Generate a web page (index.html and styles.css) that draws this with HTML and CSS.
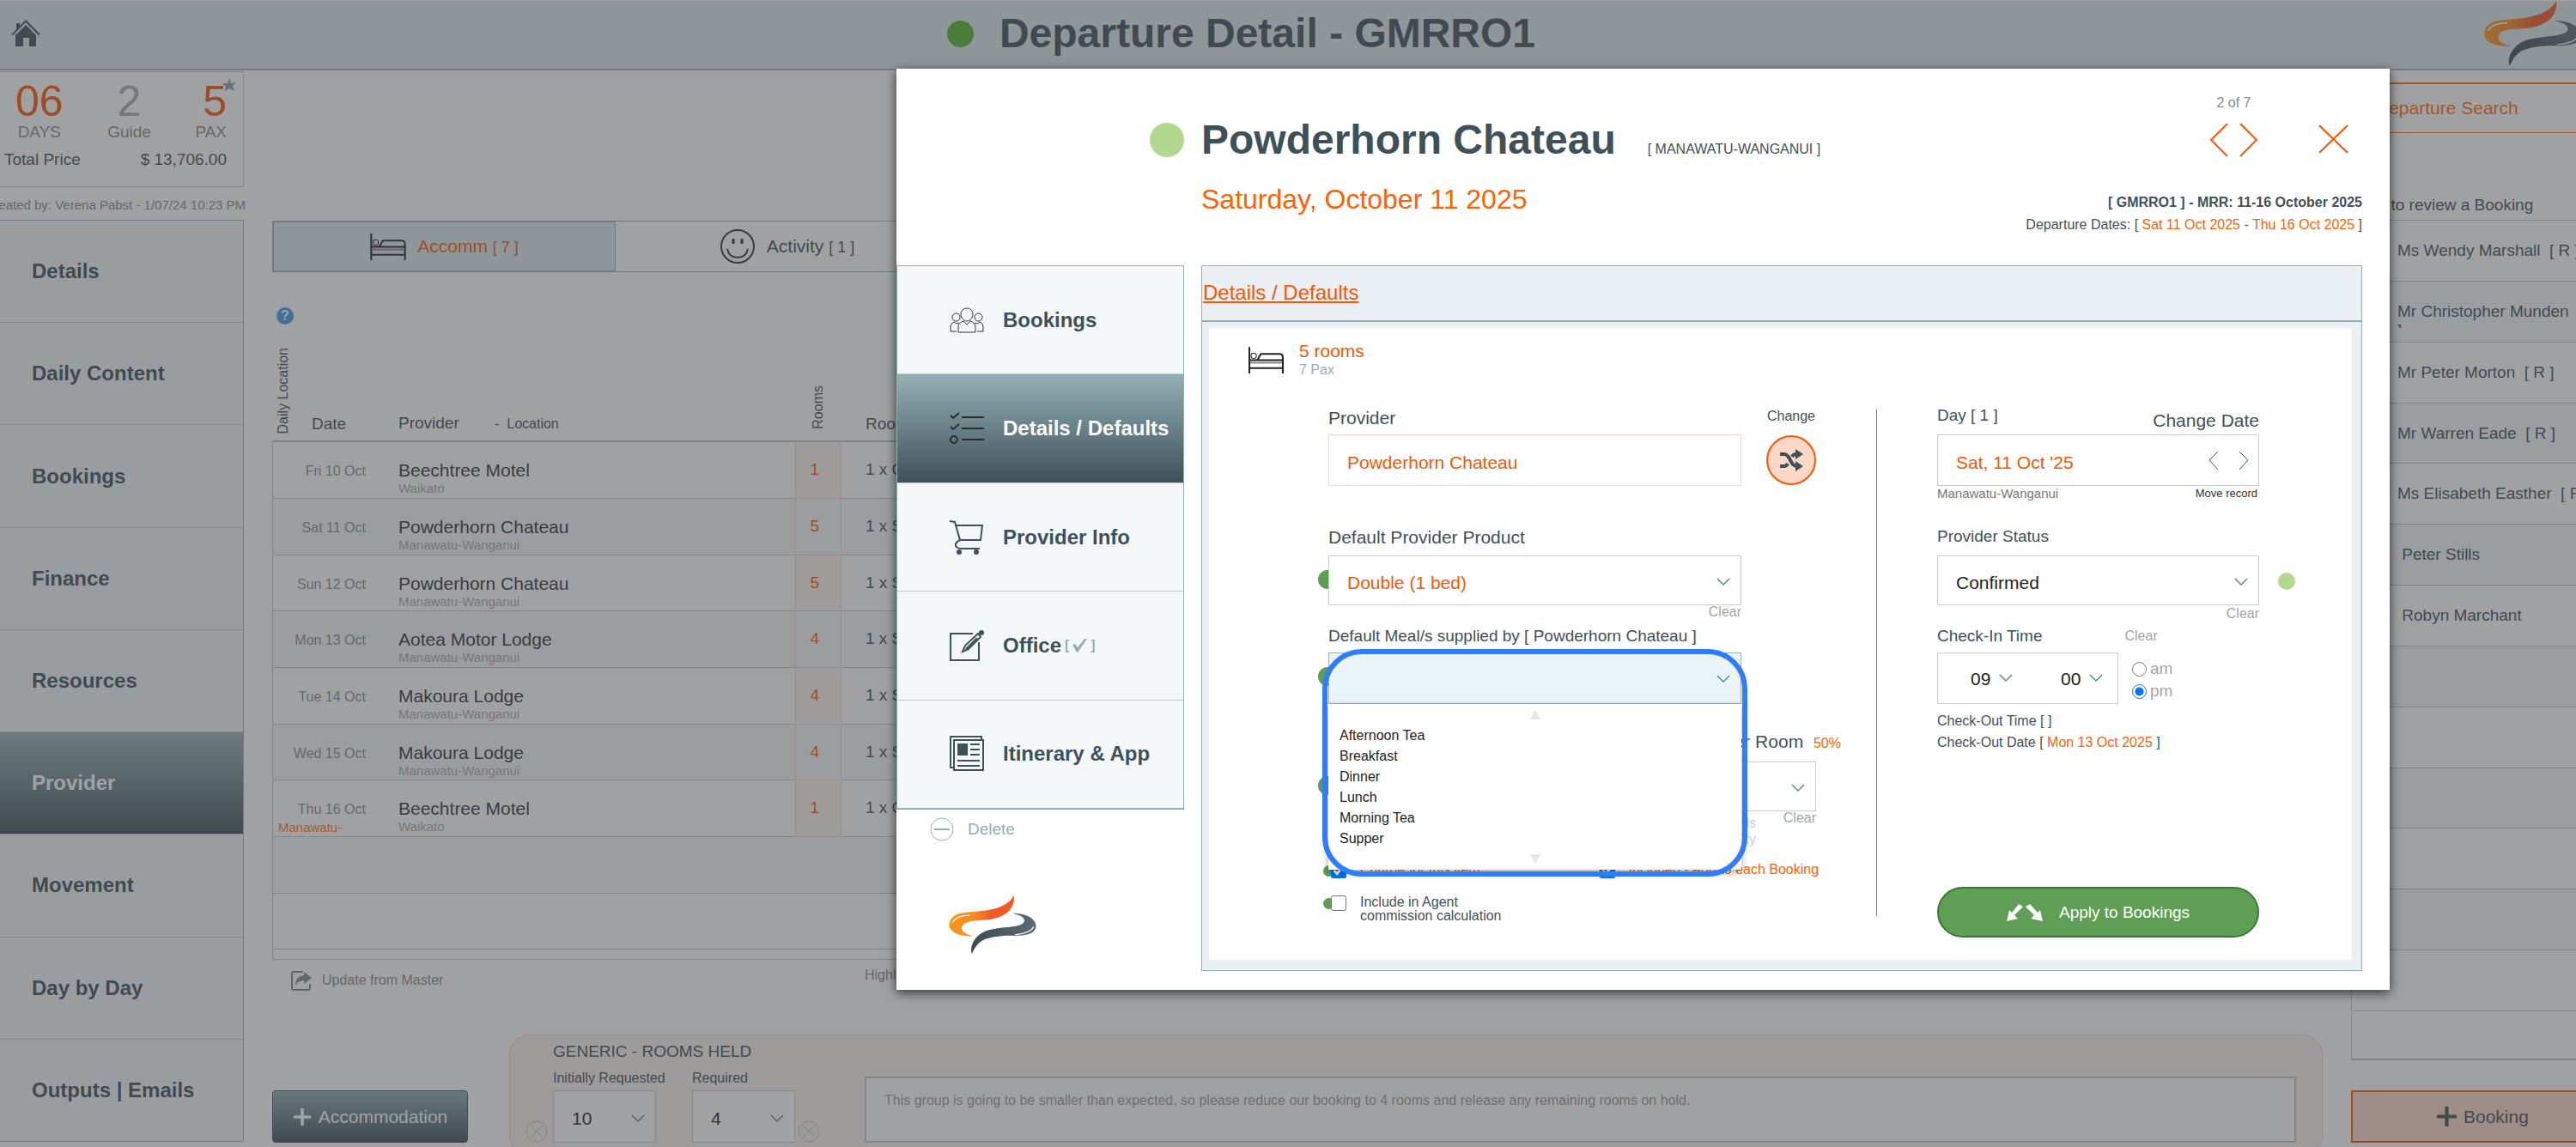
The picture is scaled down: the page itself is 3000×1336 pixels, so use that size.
FILE: index.html
```html
<!DOCTYPE html>
<html lang="en">

<head>
  <meta charset="UTF-8">
  <title>Departure Detail - GMRRO1</title>
  <link rel="stylesheet" href="styles.css">
</head>

<body>

  <!-- shared icons -->
  <svg class="sprite" aria-hidden="true">
    <defs>
      <linearGradient id="flame" x1="0" y1="0" x2="1" y2="0">
        <stop offset="0" stop-color="#f7981d" />
        <stop offset="0.4" stop-color="#f78a1e" />
        <stop offset="0.65" stop-color="#f15a24" />
        <stop offset="1" stop-color="#f1592a" />
      </linearGradient>
      <linearGradient id="slate" x1="0" y1="0" x2="1" y2="0">
        <stop offset="0" stop-color="#3c4c55" />
        <stop offset="1" stop-color="#5b6c75" />
      </linearGradient>
    </defs>
    <symbol id="logo" viewBox="132 68 312 212">
      <path fill="url(#flame)" d="M362 70C367 92 358 118 335 135C300 158 265 158 225 160C190 162 174 178 180 192C186 205 204 210 219 214C185 217 150 207 138 188C128 166 144 138 180 133C220 128 255 128 290 119C330 109 352 92 362 70Z" />
      <path fill="url(#slate)" d="M358 134C392 132 438 146 441 178C440 208 405 213 365 213C320 212 285 217 258 227C238 236 228 250 215 277C208 258 216 232 238 212C262 192 290 189 330 184C370 180 398 176 400 160C400 146 380 139 358 134Z" />
      <path fill="none" stroke="#fff" stroke-width="4" stroke-linecap="round" d="M147 165C156 150 176 141 206 141M368 209C400 206 424 197 432 183" />
    </symbol>
    <symbol id="bed" viewBox="0 0 40 30">
      <path fill="none" stroke="currentColor" stroke-width="2" d="M1 0V30M39 15V30M1 24H39M1 15H39V12Q39 8 35 8H14L10 15" />
      <path fill="none" stroke="#888" stroke-width="2" d="M2 18H38" />
      <circle cx="6" cy="10" r="3" fill="none" stroke="currentColor" stroke-width="1" />
    </symbol>
    <symbol id="down" viewBox="0 0 16 9">
      <path fill="none" stroke="#5c8a91" stroke-width="1.5" d="M1 1L8 8L15 1" />
    </symbol>
    <symbol id="cancel" viewBox="0 0 26 26">
      <path fill="none" stroke="currentColor" stroke-width="1" d="M13 1A12 12 0 1 0 13 25A12 12 0 1 0 13 1M6 6L20 20M20 6L6 20" />
    </symbol>
    <symbol id="plus" viewBox="0 0 24 24">
      <path fill="none" stroke="currentColor" stroke-width="4" d="M12 1V23M1 12H23" />
    </symbol>
  </svg>

  <header class="topbar">
    <a class="home" href="#" aria-label="Home">
      <svg width="34" height="32" viewBox="0 0 34 32">
        <path fill="#3e5159" d="M17 0L34 17L32 18L17 3L2 18L0 17L6 11V4H10V7ZM17 6L29 18V31H21V21H14V31H5V18Z" />
      </svg>
    </a>
    <h1 class="topbar-title"><span class="dot dot-live"></span>Departure Detail - GMRRO1</h1>
    <svg class="topbar-logo" width="115" height="78"><use href="#logo" /></svg>
  </header>

  <div class="layout">
    <aside class="sidebar">
      <section class="summary">
        <div class="stats">
          <div class="stat"><b class="stat-num">06</b>DAYS</div>
          <div class="stat"><b class="stat-num muted">2</b>Guide</div>
          <div class="stat stat-last"><b class="stat-num">5</b>PAX
            <svg class="star" width="16" height="16" viewBox="0 0 16 16">
              <path fill="#7fa6ab" d="M8 0L10 6L16 5L12 9L14 15L8 12L3 15L4 10L0 6L6 6Z" />
            </svg>
          </div>
        </div>
        <div class="total"><span>Total Price</span><span>$ 13,706.00</span></div>
      </section>
      <p class="created"><span>Created by: Verena Pabst - 1/07/24 10:23 PM</span></p>
      <nav class="side-nav">
        <a href="#">Details</a>
        <a href="#">Daily Content</a>
        <a href="#">Bookings</a>
        <a href="#">Finance</a>
        <a href="#">Resources</a>
        <a href="#" class="active">Provider</a>
        <a href="#">Movement</a>
        <a href="#">Day by Day</a>
        <a href="#">Outputs | Emails</a>
      </nav>
    </aside>

    <main class="main">
      <div class="tabs">
        <button class="tab active" type="button">
          <svg class="tab-bed" width="42" height="31"><use href="#bed" /></svg>
          <span>Accomm <small>[ 7 ]</small></span>
        </button>
        <button class="tab" type="button">
          <svg width="42" height="42" viewBox="0 0 42 42" fill="none" stroke="#333" stroke-width="2">
            <circle cx="21" cy="21" r="19" />
            <path d="M9 24Q11 34 21 34T33 24" />
            <path stroke-width="3" d="M16 12V18M26 12V18" />
          </svg>
          <span>Activity <small>[ 1 ]</small></span>
        </button>
      </div>
      <button class="help" type="button">?</button>

      <table class="providers">
        <colgroup>
          <col class="col-date">
          <col class="col-provider">
          <col class="col-rooms">
          <col>
        </colgroup>
        <thead>
          <tr>
            <th>
              <div class="date-head"><span class="vertical">Daily Location</span><span>Date</span></div>
            </th>
            <th>Provider <span class="head-small">-&nbsp; Location</span></th>
            <th class="rooms-head"><span class="vertical">Rooms</span></th>
            <th class="types">Rooms</th>
          </tr>
        </thead>
        <tbody>
          <tr>
            <td class="date">Fri 10 Oct</td>
            <td class="provider">Beechtree Motel<small>Waikato</small></td>
            <td class="rooms">1</td>
            <td class="types">1 x Queen</td>
          </tr>
          <tr>
            <td class="date">Sat 11 Oct</td>
            <td class="provider">Powderhorn Chateau<small>Manawatu-Wanganui</small></td>
            <td class="rooms">5</td>
            <td class="types">1 x Single</td>
          </tr>
          <tr>
            <td class="date">Sun 12 Oct</td>
            <td class="provider">Powderhorn Chateau<small>Manawatu-Wanganui</small></td>
            <td class="rooms">5</td>
            <td class="types">1 x Single</td>
          </tr>
          <tr>
            <td class="date">Mon 13 Oct</td>
            <td class="provider">Aotea Motor Lodge<small>Manawatu-Wanganui</small></td>
            <td class="rooms">4</td>
            <td class="types">1 x Single</td>
          </tr>
          <tr>
            <td class="date">Tue 14 Oct</td>
            <td class="provider">Makoura Lodge<small>Manawatu-Wanganui</small></td>
            <td class="rooms">4</td>
            <td class="types">1 x Single</td>
          </tr>
          <tr>
            <td class="date">Wed 15 Oct</td>
            <td class="provider">Makoura Lodge<small>Manawatu-Wanganui</small></td>
            <td class="rooms">4</td>
            <td class="types">1 x Single</td>
          </tr>
          <tr>
            <td class="date">Thu 16 Oct<small>Manawatu-</small></td>
            <td class="provider">Beechtree Motel<small>Waikato</small></td>
            <td class="rooms">1</td>
            <td class="types">1 x Queen</td>
          </tr>
          <tr>
            <td colspan="4"></td>
          </tr>
          <tr>
            <td colspan="4"></td>
          </tr>
        </tbody>
      </table>
      <div class="table-end"></div>

      <div class="under-table">
        <button class="update" type="button">
          <svg width="24" height="24" viewBox="0 0 24 24">
            <path fill="none" stroke="#888" stroke-width="2" d="M14 2H3Q1 2 1 4V21Q1 23 3 23H20Q22 23 22 21V16" />
            <path fill="#888" d="M15 2L24 9L15 16V12Q8 12 5 18Q5 7 15 6Z" />
          </svg>
          Update from Master
        </button>
        <span class="highlight">Highlight</span>
      </div>

      <div class="bottom">
        <button class="add-accomm" type="button"><svg width="22" height="22"><use href="#plus" /></svg>Accommodation</button>
        <section class="held">
          <div class="held-left">
            <h2>GENERIC - ROOMS HELD</h2>
            <div class="held-fields">
              <svg class="cancel" width="26" height="26"><use href="#cancel" /></svg>
              <div class="held-field">
                <label for="requested">Initially Requested</label>
                <span class="select small-select">
                  <select id="requested"><option>10</option></select>
                  <svg width="16" height="9"><use href="#down" /></svg>
                </span>
              </div>
              <div class="held-field">
                <label for="required">Required</label>
                <span class="select small-select">
                  <select id="required"><option>4</option></select>
                  <svg width="16" height="9"><use href="#down" /></svg>
                </span>
              </div>
              <svg class="cancel" width="26" height="26"><use href="#cancel" /></svg>
            </div>
          </div>
          <textarea class="held-note" aria-label="Note">This group is going to be smaller than expected, so please reduce our booking to 4 rooms and release any remaining rooms on hold.</textarea>
        </section>
      </div>
    </main>

    <aside class="bookings">
      <button class="search" type="button">Departure Search</button>
      <p class="hint">Click to review a Booking</p>
      <ul class="booking-list">
        <li><span>Ms Wendy Marshall&nbsp; [ R ]</span></li>
        <li><span>Mr Christopher Munden&nbsp; [ R ]</span></li>
        <li><span>Mr Peter Morton&nbsp; [ R ]</span></li>
        <li><span>Mr Warren Eade&nbsp; [ R ]</span></li>
        <li><span>Ms Elisabeth Easther&nbsp; [ R ]</span></li>
        <li><span>&nbsp;Peter Stills</span></li>
        <li><span>&nbsp;Robyn Marchant</span></li>
        <li></li>
        <li></li>
        <li></li>
        <li></li>
        <li></li>
        <li></li>
      </ul>
      <div class="list-end"></div>
      <button class="add-booking" type="button"><svg width="25" height="25"><use href="#plus" /></svg>Booking</button>
    </aside>
  </div>

  <div class="overlay"></div>

  <div class="modal" role="dialog" aria-label="Powderhorn Chateau">
    <header class="modal-head">
      <div class="modal-heading">
        <div class="modal-title">
          <span class="dot dot-confirmed"></span>
          <h2>Powderhorn Chateau</h2>
          <span class="region">[ MANAWATU-WANGANUI ]</span>
        </div>
        <p class="modal-date">Saturday, October 11 2025</p>
      </div>
      <div class="modal-side">
        <div class="modal-tools">
          <div class="pager">
            <span>2 of 7</span>
            <div class="pager-buttons">
              <button type="button" aria-label="Previous"><svg width="22" height="40" viewBox="0 0 22 40"><path d="M21 1L2 20L21 39" /></svg></button>
              <button type="button" aria-label="Next"><svg width="22" height="40" viewBox="0 0 22 40"><path d="M1 1L20 20L1 39" /></svg></button>
            </div>
          </div>
          <button class="close" type="button" aria-label="Close"><svg width="35" height="34" viewBox="0 0 35 34"><path d="M1 1L34 33M34 1L1 33" /></svg></button>
        </div>
        <p class="departure"><b>[ GMRRO1 ] - MRR: 11-16 October 2025</b></p>
        <p class="departure">Departure Dates: [ <span class="orange">Sat 11 Oct 2025</span> - <span class="orange">Thu 16 Oct 2025</span> ]</p>
      </div>
    </header>

    <div class="modal-body">
      <div class="modal-left">
        <nav class="modal-nav">
          <a href="#">
            <svg width="40" height="30" viewBox="0 0 40 30" fill="none" stroke="#333" stroke-width="1">
              <path d="M20 1C24 1 27 4 27 8S24 16 20 16S13 12 13 8S16 1 20 1ZM10 29V23Q10 18 16 16L20 20L24 16Q30 18 30 23V29Z" />
              <path d="M7 7A4 4 0 1 0 8 16A4 4 0 0 0 7 7M33 7A4 4 0 1 0 34 16A4 4 0 0 0 33 7M8 28H1V22Q1 19 5 17L8 19L11 18M32 28H39V22Q39 19 35 17L32 19L29 18" />
            </svg>
            Bookings
          </a>
          <a href="#" class="active">
            <svg width="40" height="38" viewBox="0 0 40 38" fill="none" stroke="#2c2c2c" stroke-width="2">
              <path d="M1 4L4 7L11 1M1 17L4 20L11 14M14 6H40M14 19H40M14 32H40" />
              <circle cx="5" cy="32" r="4" />
            </svg>
            Details / Defaults
          </a>
          <a href="#">
            <svg width="40" height="42" viewBox="0 0 40 42" fill="none" stroke="#3e5159" stroke-width="2">
              <path d="M0 2L6 3L12 24H36L38 7H8M12 24Q6 27 7 31Q9 34 14 34H35" />
              <circle cx="11" cy="38" r="3" fill="#3e5159" stroke="none" />
              <circle cx="31" cy="38" r="3" fill="#3e5159" stroke="none" />
            </svg>
            Provider Info
          </a>
          <a href="#">
            <svg width="40" height="38" viewBox="0 0 40 38" fill="none" stroke="#3e5159" stroke-width="2">
              <path d="M27 5H1V36H34V15" />
              <path d="M15 26L18 19L33 5L36 9L22 23ZM19 23L32 10" />
              <circle cx="37" cy="4" r="3" fill="#3e5159" stroke="none" />
            </svg>
            Office <small>[ <svg width="17" height="16" viewBox="0 0 17 16"><path fill="#93b0b5" d="M0 7L3 6L6 10L14 0H17L6 16H5Z" /></svg> ]</small>
          </a>
          <a href="#">
            <svg width="40" height="42" viewBox="0 0 40 42" fill="none" stroke="#3e5159" stroke-width="2">
              <path d="M5 37H1V1H37V5M5 5H39V40H5ZM24 10H35M24 16H35M24 22H35M9 29H35M9 35H35" />
              <path fill="#3e5159" stroke="none" d="M9 9H21V23H9Z" />
            </svg>
            Itinerary &amp; App
          </a>
        </nav>
        <button class="delete" type="button">
          <svg width="28" height="28" viewBox="0 0 28 28" fill="none" stroke="#93b0b5"><circle cx="14" cy="14" r="13" /><path stroke-width="2" d="M5 14H23" /></svg>
          Delete
        </button>
        <svg class="modal-logo" width="104" height="70"><use href="#logo" /></svg>
      </div>

      <section class="panel">
        <div class="panel-head"><a href="#">Details / Defaults</a></div>
        <div class="panel-body">
          <div class="sheet">
            <div class="rooms-line">
              <svg width="41" height="31"><use href="#bed" /></svg>
              <div>
                <p class="rooms-count">5 rooms</p>
                <p class="pax">7 Pax</p>
              </div>
            </div>

            <form class="form">
              <div class="form-left">
                <div class="row provider-row">
                  <div class="field">
                    <label for="provider">Provider</label>
                    <input id="provider" class="box box-orange" value="Powderhorn Chateau">
                  </div>
                  <div class="change">
                    <label for="change">Change</label>
                    <button id="change" type="button">
                      <svg width="28" height="26" viewBox="0 0 28 26">
                        <path fill="none" stroke="#3e5159" stroke-width="4" d="M1 6H6C13 6 13 20 20 20H21M1 20H6C8 20 9 19 10 17M15 9C16 7 18 6 20 6H21" />
                        <path fill="#3e5159" d="M19 0L28 6L19 12ZM19 14L28 20L19 26Z" />
                      </svg>
                    </button>
                  </div>
                </div>

                <div class="field product">
                  <label for="product">Default Provider Product</label>
                  <span class="select marked">
                    <select id="product" class="orange-text"><option>Double (1 bed)</option></select>
                    <svg width="16" height="9"><use href="#down" /></svg>
                  </span>
                  <button class="clear" type="button">Clear</button>
                </div>

                <div class="field meals">
                  <label class="label-md" for="meals">Default Meal/s supplied by [ Powderhorn Chateau ]</label>
                  <span class="select marked open">
                    <select id="meals"><option></option></select>
                    <svg width="16" height="9"><use href="#down" /></svg>
                  </span>
                  <ul class="menu">
                    <li class="scroll-up"></li>
                    <li>Afternoon Tea</li>
                    <li>Breakfast</li>
                    <li>Dinner</li>
                    <li>Lunch</li>
                    <li>Morning Tea</li>
                    <li>Supper</li>
                    <li class="scroll-down"></li>
                  </ul>
                  <div class="ring"></div>
                </div>

                <div class="row per-room">
                  <span class="select marked room-type">
                    <select aria-label="Room type"><option></option></select>
                  </span>
                  <div class="field">
                    <label for="perroom">per Room <small>50%</small></label>
                    <span class="select">
                      <select id="perroom"><option></option></select>
                      <svg width="16" height="9"><use href="#down" /></svg>
                    </span>
                  </div>
                </div>
                <div class="per-room-notes">
                  <p>Meals<br>Qty</p>
                  <button class="clear" type="button">Clear</button>
                </div>

                <div class="checks">
                  <label class="check marked"><input type="checkbox" checked><span>Charge for this item</span></label>
                  <label class="check"><input type="checkbox" checked><span>Included - Add to each Booking</span></label>
                </div>
                <label class="check marked dark"><input type="checkbox"><span>Include in Agent<br>commission calculation</span></label>
              </div>

              <div class="form-right">
                <div class="row day-head">
                  <span class="label-md">Day [ 1 ]</span>
                  <label for="day">Change Date</label>
                </div>
                <div class="box day-box">
                  <input id="day" value="Sat, 11 Oct '25">
                  <button type="button" aria-label="Earlier"><svg width="12" height="23" viewBox="0 0 12 23"><path d="M11 1L1 11L11 22" /></svg></button>
                  <button type="button" aria-label="Later"><svg width="12" height="23" viewBox="0 0 12 23"><path d="M1 1L11 11L1 22" /></svg></button>
                </div>
                <div class="row day-foot"><span>Manawatu-Wanganui</span><small>Move record</small></div>

                <div class="field status">
                  <label class="label-md" for="status">Provider Status</label>
                  <span class="select">
                    <select id="status"><option>Confirmed</option></select>
                    <svg width="16" height="9"><use href="#down" /></svg>
                    <span class="dot status-dot"></span>
                  </span>
                  <button class="clear" type="button">Clear</button>
                </div>

                <div class="checkin-head">
                  <span class="label-md">Check-In Time</span>
                  <button class="clear" type="button">Clear</button>
                </div>
                <div class="checkin">
                  <div class="box time">
                    <span class="mini"><select aria-label="Hour"><option>09</option></select><svg width="16" height="9"><use href="#down" /></svg></span>
                    <span class="mini"><select aria-label="Minute"><option>00</option></select><svg width="16" height="9"><use href="#down" /></svg></span>
                  </div>
                  <div class="ampm">
                    <label><input type="radio" name="ampm">am</label>
                    <label><input type="radio" name="ampm" checked>pm</label>
                  </div>
                </div>
                <p class="checkout first">Check-Out Time [ ]</p>
                <p class="checkout">Check-Out Date [ <span class="orange">Mon 13 Oct 2025</span> ]</p>

                <button class="apply" type="button">
                  <svg width="42" height="20" viewBox="0 0 42 20">
                    <path fill="#fff" d="M14 0L19 3L9 13L13 17L0 20L3 7L6 10ZM27 0L22 3L32 13L28 17L42 20L39 7L36 10Z" />
                  </svg>
                  Apply to Bookings
                </button>
              </div>
            </form>
          </div>
        </div>
      </section>
    </div>
  </div>

</body>

</html>
```
FILE: styles.css
```css
* {
  box-sizing: border-box;
}

html {
  overflow: hidden;
}

body {
  position: relative;
  margin: 0;
  height: 100vh;
  overflow: hidden;
  background: #fff;
  color: #3e5159;
  font-family: "Liberation Sans", Arial, sans-serif;
  font-size: 19px;
  line-height: 22px;
}

h1,
h2,
p,
ul {
  margin: 0;
  padding: 0;
}

ul {
  list-style: none;
}

a {
  color: inherit;
  text-decoration: none;
}

button,
input,
select,
textarea {
  font: inherit;
  color: inherit;
}

button {
  border: 0;
  padding: 0;
  background: none;
  cursor: pointer;
}

svg {
  flex: none;
  display: block;
}

.sprite {
  position: absolute;
  width: 0;
  height: 0;
}

.dot {
  flex: none;
  border-radius: 50%;
}

.orange {
  color: #ff6200;
}

/* top bar */
.topbar {
  display: flex;
  align-items: center;
  justify-content: space-between;
  height: 82px;
  border-top: 1px solid #fff;
  border-bottom: 2px solid #98b8bc;
  background: #dde9ea;
  padding: 0 0 3px 13px;
}

.topbar-title {
  display: flex;
  align-items: center;
  gap: 30px;
  margin-right: 48px;
  font-size: 48px;
  line-height: 56px;
}

.dot-live {
  width: 31px;
  height: 31px;
  background: #52b52e;
}

.topbar-logo {
  margin-right: -7px;
}

/* page columns */
.layout {
  display: grid;
  grid-template-columns: 284px 1fr 298px;
  column-gap: 33px;
  margin-right: -36px;
}

.summary {
  height: 135px;
  margin-top: 1px;
  border: 1px solid #c4c6c7;
  border-left: 0;
  padding: 9px 19px 0 5px;
}

.stats {
  display: flex;
  justify-content: space-between;
  padding-left: 13px;
  color: #8a8c8d;
}

.stat {
  position: relative;
  text-align: center;
}

.stat-last {
  text-align: right;
}

.stat-num {
  display: block;
  color: #f95602;
  font-size: 50px;
  font-weight: normal;
  line-height: 50px;
}

.stat-num.muted {
  color: #aaa;
}

.star {
  position: absolute;
  top: -2px;
  right: -11px;
}

.total {
  display: flex;
  justify-content: space-between;
  margin-top: 10px;
}

.created {
  display: flex;
  justify-content: flex-end;
  height: 38px;
  padding-top: 8px;
  margin-right: -2px;
  color: #8a8c8d;
  font-size: 15px;
  line-height: 26px;
  white-space: nowrap;
}

.side-nav {
  display: flex;
  flex-direction: column;
  height: 1074px;
  border: 1px solid #98b8bc;
  border-left: 0;
  background: #f3f7f8;
}

.side-nav a {
  flex: 1;
  display: flex;
  align-items: center;
  padding-left: 37px;
  border-bottom: 1px solid #c8cacb;
  font-size: 24px;
  font-weight: bold;
}

.side-nav a:last-child {
  border-bottom: 0;
}

.side-nav .active {
  background: linear-gradient(#98b4b8, #3e5159);
  color: #fff;
}

/* main area */
.main {
  padding-top: 175px;
  min-width: 0;
}

.tabs {
  display: flex;
  height: 60px;
  border: 1px solid #98b8bc;
}

.tab {
  display: flex;
  align-items: center;
  justify-content: center;
  gap: 13px;
  width: 399px;
  font-size: 21px;
}

.tab small {
  font-size: 18px;
}

.tab.active {
  border: 1px solid #98b8bc;
  background: #dde9ea;
  color: #f95602;
}

.tab-bed {
  color: #222;
}

.help {
  display: block;
  width: 20px;
  height: 20px;
  margin: 41px 0 0 5px;
  border-radius: 50%;
  background: #3f9ce6;
  color: #fff;
  font-size: 16px;
  font-weight: bold;
  line-height: 20px;
}

.providers {
  width: 100%;
  table-layout: fixed;
  border-spacing: 0;
}

.col-date {
  width: 147px;
}

.col-provider {
  width: 462px;
}

.col-rooms {
  width: 54px;
}

.providers th {
  height: 137px;
  padding: 0 0 8px;
  border-bottom: 2px solid #c0c2c3;
  font-weight: normal;
  text-align: left;
  vertical-align: bottom;
}

.date-head {
  display: flex;
  align-items: flex-end;
  gap: 24px;
  padding-left: 4px;
}

.vertical {
  writing-mode: vertical-rl;
  transform: rotate(180deg);
  font-size: 16px;
  line-height: 18px;
}

.head-small {
  margin-left: 36px;
  font-size: 16px;
}

.providers .rooms-head {
  padding-left: 18px;
}

.providers .types {
  padding-left: 28px;
}

.providers td {
  height: 66px;
  padding: 20px 0 0;
  border-bottom: 1px solid #c4c6c7;
  line-height: 24px;
  vertical-align: top;
}

.providers td:first-child {
  border-left: 1px solid #c4c6c7;
}

.providers td:last-child {
  border-right: 1px solid #c4c6c7;
}

.providers tr:nth-child(3n) td {
  height: 65px;
}

.providers tr:nth-child(even) td {
  background: #f3f8f8;
}

.providers td small {
  display: block;
  color: #aaa;
  font-size: 15px;
  line-height: 18px;
}

.providers .date {
  padding: 22px 38px 0 6px;
  color: #8a8c8d;
  font-size: 16px;
  text-align: right;
}

.providers .date small {
  color: #ff7a10;
  text-align: left;
}

.providers .provider {
  padding-top: 21px;
  color: #333;
  font-size: 21px;
}

.providers tbody .rooms {
  border: 1px solid #f0d2c2;
  border-top-width: 0;
  background: #fbf3ec;
  color: #f95602;
  padding-right: 25px;
  text-align: right;
}

.table-end {
  height: 12px;
  border: 1px solid #c4c6c7;
  border-top: 0;
}

.under-table {
  display: flex;
  height: 87px;
  padding: 7px 0 0 22px;
  color: #8a8c8d;
  font-size: 16px;
}

.update {
  display: flex;
  align-items: center;
  align-self: flex-start;
  gap: 12px;
  width: 668px;
  height: 34px;
}

.bottom {
  display: flex;
  gap: 48px;
}

.add-accomm {
  display: flex;
  align-items: center;
  justify-content: center;
  gap: 8px;
  width: 228px;
  height: 61px;
  margin-top: 65px;
  border: 1px solid #3e5159;
  border-radius: 4px;
  background: linear-gradient(#8fadb2, #3e5159);
  color: #fff;
  font-size: 21px;
}

.held {
  flex: 1;
  display: flex;
  align-items: flex-start;
  gap: 52px;
  height: 141px;
  padding: 8px 30px 0 18px;
  border: 1px solid #f0d2c2;
  border-radius: 24px;
  background: #fbf5ef;
}

.held h2 {
  padding-left: 32px;
  font-size: 19px;
  font-weight: normal;
}

.held-fields {
  display: flex;
  align-items: flex-end;
  margin-top: 10px;
}

.held-field {
  width: 120px;
  margin: 0 0 0 6px;
}

.held-field + .held-field {
  margin: 0 3px 0 42px;
}

.held-field label {
  display: block;
  margin-bottom: 4px;
  font-size: 16px;
  line-height: 20px;
  white-space: nowrap;
}

.cancel {
  color: #a9c6c9;
}

.held-note {
  flex: 1;
  height: 77px;
  margin: 40px 0 0;
  padding: 14px 21px;
  border: 2px solid #c4c6c7;
  border-radius: 0;
  background: #fff;
  color: #9a9a9a;
  font-size: 16px;
  line-height: 24px;
  resize: none;
}

/* bookings column */
.search {
  display: block;
  width: 100%;
  height: 59px;
  margin-top: 14px;
  padding-left: 28px;
  border: 1px solid #ff6a10;
  border-top-width: 2px;
  color: #ff6a10;
  font-size: 21px;
  text-align: left;
}

.hint {
  margin-top: 73px;
  height: 28px;
}

.booking-list {
  display: flex;
  flex-direction: column;
  height: 922px;
  border-top: 1px solid #c4c6c7;
  border-left: 1px solid #c4c6c7;
}

.booking-list li {
  flex: 1;
  padding: 24px 0 0 53px;
  border-bottom: 1px solid #c4c6c7;
}

.booking-list li:nth-child(even) {
  background: #f3f8f8;
}

.booking-list span {
  display: block;
  height: 30px;
  overflow: hidden;
}

.list-end {
  height: 57px;
  border-left: 1px solid #c4c6c7;
  border-bottom: 2px solid #c4c6c7;
}

.add-booking {
  display: flex;
  align-items: center;
  gap: 7px;
  width: 100%;
  height: 61px;
  margin-top: 35px;
  padding-left: 97px;
  border: 2px solid #f95602;
  background: #fdd8c6;
  font-size: 21px;
}

.overlay {
  position: absolute;
  inset: 0;
  background: rgba(66, 68, 72, 0.5);
}

/* modal */
.modal {
  position: absolute;
  top: 80px;
  left: 1044px;
  right: 217px;
  padding-bottom: 22px;
  background: #fff;
  box-shadow: 0 3px 12px rgba(0, 0, 0, 0.7);
}

.modal-head {
  display: flex;
  justify-content: space-between;
  height: 229px;
  padding: 0 32px 0 295px;
}

.modal-title {
  display: flex;
  align-items: center;
  gap: 20px;
  margin-top: 55px;
}

.dot-confirmed {
  width: 40px;
  height: 40px;
  background: #b3d98f;
}

.modal-title h2 {
  font-size: 48px;
  line-height: 56px;
}

.region {
  padding: 22px 0 0 17px;
  font-size: 16px;
}

.modal-date {
  margin: 21px 0 0 60px;
  color: #ff6200;
  font-size: 32px;
  line-height: 40px;
}

.modal-side {
  display: flex;
  flex-direction: column;
  align-items: flex-end;
  padding-top: 30px;
}

.modal-tools {
  display: flex;
  align-items: flex-end;
  gap: 70px;
  margin: 0 16px 40px 0;
}

.modal-tools path {
  fill: none;
  stroke: #f95602;
  stroke-width: 2;
}

.pager {
  color: #8a8c8d;
  font-size: 16px;
  line-height: 20px;
  text-align: center;
}

.pager-buttons {
  display: flex;
  gap: 13px;
  margin-top: 13px;
}

.close {
  margin-bottom: 4px;
}

.departure {
  font-size: 16px;
  line-height: 26px;
}

.modal-body {
  display: grid;
  grid-template-columns: 335px 1fr;
  column-gap: 20px;
  padding-right: 32px;
}

.modal-nav {
  display: flex;
  flex-direction: column;
  height: 634px;
  border: 1px solid #93b0b5;
  border-bottom-width: 2px;
  background: #f3f7f8;
}

.modal-nav a {
  flex: 1;
  display: flex;
  align-items: center;
  gap: 22px;
  padding-left: 61px;
  border-bottom: 1px solid #c9cdd0;
  font-size: 24px;
  font-weight: bold;
  white-space: nowrap;
}

.modal-nav a:last-child {
  border-bottom: 0;
}

.modal-nav .active {
  background: linear-gradient(#93b0b5, #3e5159);
  color: #fff;
}

.modal-nav small {
  display: flex;
  align-items: center;
  gap: 4px;
  margin-left: -18px;
  color: #93b0b5;
  font-size: 16px;
}

.delete {
  display: flex;
  align-items: center;
  gap: 16px;
  margin: 9px 0 0 39px;
  color: #93b0b5;
}

.modal-logo {
  margin: 62px 0 0 60px;
}

.panel {
  border: 1px solid #93b0b5;
  background: #e9eff2;
}

.panel-head {
  height: 65px;
  padding: 17px 0 0 1px;
  border-bottom: 2px solid #93b0b5;
  color: #f95602;
  font-size: 24px;
  line-height: 28px;
}

.panel-head a {
  text-decoration: underline;
}

.panel-body {
  padding: 7px 11px 12px 8px;
}

.sheet {
  padding: 15px 0 26px;
  background: #fff;
}

.rooms-line {
  display: flex;
  align-items: center;
  gap: 18px;
  padding-left: 46px;
  color: #222;
}

.rooms-count {
  color: #f95602;
  font-size: 21px;
  line-height: 24px;
}

.pax {
  color: #93b0b5;
  font-size: 16px;
  line-height: 20px;
}

.form {
  display: grid;
  grid-template-columns: 568px 375px;
  column-gap: 141px;
  margin: 29px 0 0 139px;
}

.form label {
  display: block;
  font-size: 21px;
  line-height: 24px;
}

.form .label-md {
  font-size: 19px;
  line-height: 22px;
}

.row {
  display: flex;
  justify-content: space-between;
}

.box {
  display: block;
  width: 100%;
  height: 60px;
  margin: 0;
  padding: 5px 21px 0;
  border: 1px solid #c9cdd0;
  border-radius: 0;
  background: #fff;
  color: #f95602;
  font-size: 21px;
}

.box-orange {
  border-color: #fbd3bd;
}

.select {
  position: relative;
  display: block;
}

.select select {
  position: relative;
  appearance: none;
  display: block;
  width: 100%;
  height: 58px;
  padding: 5px 21px 0;
  border: 1px solid #c9cdd0;
  border-radius: 0;
  background: #fff;
  color: #222;
  font-size: 21px;
}

.select select.orange-text {
  color: #f95602;
}

.select > svg {
  position: absolute;
  top: 26px;
  right: 13px;
}

/* half circle peeking out on the left of a control */
.marked {
  position: relative;
}

.marked::before {
  content: "";
  position: absolute;
  top: 17px;
  left: -12px;
  width: 22px;
  height: 22px;
  border-radius: 50%;
  background: #5c9e52;
}

.small-select select {
  height: 61px;
}

.small-select > svg {
  top: 28px;
}

.clear {
  display: block;
  margin-left: auto;
  color: #a5a5a5;
  font-size: 16px;
  line-height: 16px;
}

.form-left .field {
  width: 481px;
}

.provider-row {
  margin-top: 5px;
}

.provider-row .box {
  margin-top: 7px;
}

.change {
  width: 58px;
}

.form .change label {
  margin-bottom: 12px;
  font-size: 16px;
  line-height: 20px;
  text-align: center;
}

.change button {
  display: flex;
  align-items: center;
  justify-content: center;
  width: 58px;
  height: 58px;
  border: 2px solid #f95602;
  border-radius: 50%;
  background: #fdd8c6;
}

.product {
  margin-top: 48px;
}

.product .select {
  margin-top: 9px;
}

.meals {
  position: relative;
  margin-top: 9px;
}

.meals .select {
  margin-top: 8px;
}

.open select {
  height: 60px;
  border-color: #93b0b5;
  background: #eaf4f6;
}

.menu {
  position: absolute;
  z-index: 1;
  top: 90px;
  left: 0;
  width: 100%;
  height: 193px;
  padding: 7px 13px 0;
  background: #fff;
  box-shadow: 0 3px 8px rgba(0, 0, 0, 0.35);
  color: #222;
  font-size: 16px;
  line-height: 24px;
}

.scroll-up,
.scroll-down {
  width: 0;
  margin: 0 auto;
  border: 6px solid transparent;
  border-top: 0;
  border-bottom: 11px solid #e6e6e6;
}

.scroll-up {
  margin-bottom: 7px;
}

.scroll-down {
  margin-top: 6px;
  border-top: 11px solid #e6e6e6;
  border-bottom: 0;
}

.ring {
  position: absolute;
  z-index: 2;
  top: 26px;
  left: -7px;
  right: -7px;
  height: 265px;
  border: 6px solid #2f7dff;
  border-radius: 46px;
}

.per-room {
  align-items: flex-end;
  margin-top: 32px;
}

.room-type {
  width: 240px;
}

.form-left .per-room .field {
  width: 240px;
}

.per-room label {
  margin: 0 -29px 9px 0;
  text-align: right;
}

.per-room small {
  margin-left: 6px;
  color: #ff6200;
  font-size: 16px;
}

.per-room-notes {
  display: flex;
  height: 60px;
}

.per-room-notes p {
  width: 498px;
  padding-top: 4px;
  color: #ccc;
  font-size: 16px;
  line-height: 19px;
  text-align: right;
}

.per-room-notes .clear {
  align-self: flex-start;
}

.checks {
  display: flex;
  gap: 136px;
}

.form .check {
  display: flex;
  gap: 16px;
  color: #ff6200;
  font-size: 16px;
  line-height: 16px;
  white-space: nowrap;
}

.form .check.dark {
  margin-top: 20px;
  color: #3e5159;
}

.check input {
  position: relative;
  width: 18px;
  height: 18px;
  margin: 0 0 0 3px;
}

.check.marked::before {
  top: 3px;
  left: -6px;
  width: 13px;
  height: 13px;
}

/* right half of the form, split off by an orange rule */
.form-right {
  position: relative;
}

.form-right::before {
  content: "";
  position: absolute;
  top: 7px;
  bottom: 25px;
  left: -71px;
  width: 1px;
  background: #f95602;
}

.day-head {
  padding-top: 3px;
}

.day-head label {
  margin: 5px 0 4px;
}

.day-box {
  display: flex;
  align-items: center;
  gap: 23px;
  padding: 0 11px 0 21px;
}

.day-box input {
  flex: 1;
  min-width: 0;
  padding: 6px 0 0;
  border: 0;
}

.day-box path {
  fill: none;
  stroke: #3e5159;
  stroke-width: 1;
}

.day-foot {
  height: 18px;
  color: #777;
  font-size: 15px;
  line-height: 18px;
}

.day-foot small {
  padding-right: 2px;
  color: #333;
  font-size: 13px;
}

.status {
  margin-top: 30px;
}

.status .select {
  margin: 11px 0 2px;
}

.status-dot {
  position: absolute;
  top: 20px;
  right: -42px;
  width: 20px;
  height: 20px;
  background: #b3d98f;
}

.checkin-head {
  display: flex;
  gap: 96px;
  margin-top: 7px;
}

.checkin-head .clear {
  margin-left: 0;
  line-height: 22px;
}

.checkin {
  display: flex;
  gap: 13px;
  margin-top: 8px;
}

.time {
  display: flex;
  gap: 56px;
  width: 211px;
  padding: 2px 0 0 38px;
}

.mini {
  display: flex;
  align-items: center;
  gap: 9px;
}

.mini select {
  appearance: none;
  padding: 0;
  border: 0;
  background: none;
  color: #222;
}

.mini svg {
  margin-top: -3px;
}

.form .ampm label {
  display: flex;
  align-items: center;
  gap: 4px;
  color: #a5a5a5;
  font-size: 19px;
  line-height: 26px;
}

.ampm {
  padding-top: 6px;
}

.ampm input {
  width: 17px;
  height: 17px;
  margin: 0 0 0 3px;
}

.checkout {
  font-size: 16px;
  line-height: 25px;
}

.checkout.first {
  margin-top: 7px;
}

.apply {
  display: flex;
  align-items: center;
  justify-content: center;
  gap: 19px;
  width: 375px;
  height: 59px;
  margin-top: 156px;
  border: 2px solid #357a2f;
  border-radius: 30px;
  background: #5f9f55;
  color: #fff;
}
```
